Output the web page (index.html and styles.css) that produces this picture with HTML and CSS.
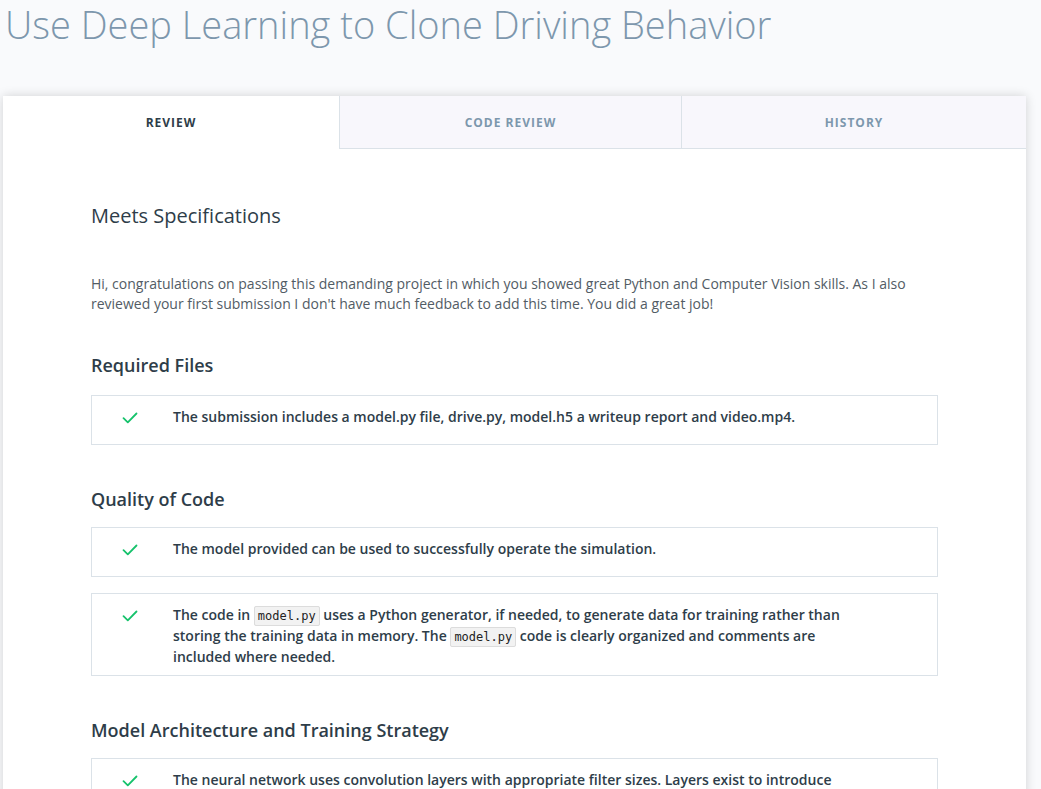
FILE: index.html
```html
<!DOCTYPE html>
<html lang="en">
<head>
<meta charset="utf-8">
<title>Use Deep Learning to Clone Driving Behavior</title>
<link rel="stylesheet" href="styles.css">
</head>
<body>
<h1 class="page-title">Use Deep Learning to Clone Driving Behavior</h1>
<div class="card">
  <nav class="tabs">
    <div class="tab active">Review</div>
    <div class="tab">Code Review</div>
    <div class="tab">History</div>
  </nav>
  <div class="content">
    <h2 class="result">Meets Specifications</h2>
    <p class="summary">Hi, congratulations on passing this demanding project in which you showed great Python and Computer Vision skills. As I also reviewed your first submission I don't have much feedback to add this time. You did a great job!</p>

    <section class="section">
      <h3 class="section-title">Required Files</h3>
      <ul class="items">
        <li class="item">
          <span class="check"><svg width="16" height="12" viewBox="0 0 16 12"><path d="M1.5 6.2 L5.8 10.3 L14.5 1.5" fill="none" stroke="#15c26b" stroke-width="1.8" stroke-linecap="round" stroke-linejoin="round"/></svg></span>
          <div class="item-text">The submission includes a model.py file, drive.py, model.h5 a writeup report and video.mp4.</div>
        </li>
      </ul>
    </section>

    <section class="section">
      <h3 class="section-title">Quality of Code</h3>
      <ul class="items">
        <li class="item">
          <span class="check"><svg width="16" height="12" viewBox="0 0 16 12"><path d="M1.5 6.2 L5.8 10.3 L14.5 1.5" fill="none" stroke="#15c26b" stroke-width="1.8" stroke-linecap="round" stroke-linejoin="round"/></svg></span>
          <div class="item-text">The model provided can be used to successfully operate the simulation.</div>
        </li>
        <li class="item">
          <span class="check"><svg width="16" height="12" viewBox="0 0 16 12"><path d="M1.5 6.2 L5.8 10.3 L14.5 1.5" fill="none" stroke="#15c26b" stroke-width="1.8" stroke-linecap="round" stroke-linejoin="round"/></svg></span>
          <div class="item-text narrow">The code in <code>model.py</code> uses a Python generator, if needed, to generate data for training rather than storing the training data in memory. The <code>model.py</code> code is clearly organized and comments are included where needed.</div>
        </li>
      </ul>
    </section>

    <section class="section">
      <h3 class="section-title">Model Architecture and Training Strategy</h3>
      <ul class="items">
        <li class="item">
          <span class="check"><svg width="16" height="12" viewBox="0 0 16 12"><path d="M1.5 6.2 L5.8 10.3 L14.5 1.5" fill="none" stroke="#15c26b" stroke-width="1.8" stroke-linecap="round" stroke-linejoin="round"/></svg></span>
          <div class="item-text narrow">The neural network uses convolution layers with appropriate filter sizes. Layers exist to introduce nonlinearity into the model. The data is normalized in the model.</div>
        </li>
      </ul>
    </section>
  </div>
</div>
</body>
</html>
```

FILE: styles.css
```css
html, body {
  margin: 0;
  padding: 0;
}
body {
  background: #f9fafc;
  font-family: "Open Sans", "Liberation Sans", sans-serif;
  color: #2e3d49;
  overflow: hidden;
}
.page-title {
  margin: 0;
  padding: 2px 0 0 5px;
  font-size: 38px;
  font-weight: 300;
  line-height: 44px;
  color: #7d97ad;
}
.card {
  margin: 50px 0 0 3px;
  width: 1023px;
  background: #fff;
  box-shadow: 0 0 10px rgba(0, 0, 0, 0.16);
}
.tabs {
  display: grid;
  grid-template-columns: 336px 342px 1fr;
}
.tab {
  height: 52px;
  display: flex;
  align-items: center;
  justify-content: center;
  text-transform: uppercase;
  font-size: 12px;
  font-weight: 700;
  letter-spacing: 1px;
  color: #7d97ad;
  background: #f8f7fc;
  border-left: 1px solid #dbe2e8;
  border-bottom: 1px solid #dbe2e8;
}
.tab.active {
  background: #fff;
  color: #2e3d49;
  border-left: none;
  border-bottom-color: #fff;
}
.content {
  padding: 53px 88px 40px 88px;
}
.result {
  margin: 0;
  font-size: 20px;
  font-weight: 400;
  line-height: 28px;
  color: #2e3d49;
}
.summary {
  margin: 44px 0 0 0;
  font-size: 14px;
  line-height: 20px;
  color: #525c65;
}
.section {
  margin-top: 39px;
}
.section + .section {
  margin-top: 42px;
}
.section-title {
  margin: 0 0 18px 0;
  font-size: 18px;
  font-weight: 600;
  line-height: 24px;
  color: #2e3d49;
}
.section + .section .section-title {
  margin-bottom: 16px;
}
.items {
  list-style: none;
  margin: 0;
  padding: 0;
  display: flex;
  flex-direction: column;
  gap: 16px;
}
.item {
  display: flex;
  border: 1px solid #dbe2e8;
  min-height: 48px;
}
.check {
  flex: 0 0 81px;
  display: flex;
  justify-content: center;
  padding: 16px 18px 0 0;
  box-sizing: border-box;
}
.check svg {
  display: block;
  margin-left: 12px;
}
.item-text {
  flex: 1;
  padding: 10px 20px 8px 0;
  font-size: 14px;
  font-weight: 600;
  line-height: 21px;
  color: #2e3d49;
}
.item-text.narrow {
  padding-right: 90px;
}
code {
  font-family: "DejaVu Sans Mono", "Liberation Mono", monospace;
  font-size: 12px;
  font-weight: 400;
  line-height: 12px;
  background: #f2f2f2;
  border: 1px solid #dcdcdc;
  border-radius: 2px;
  padding: 2px 3px;
  color: #222;
}
```
